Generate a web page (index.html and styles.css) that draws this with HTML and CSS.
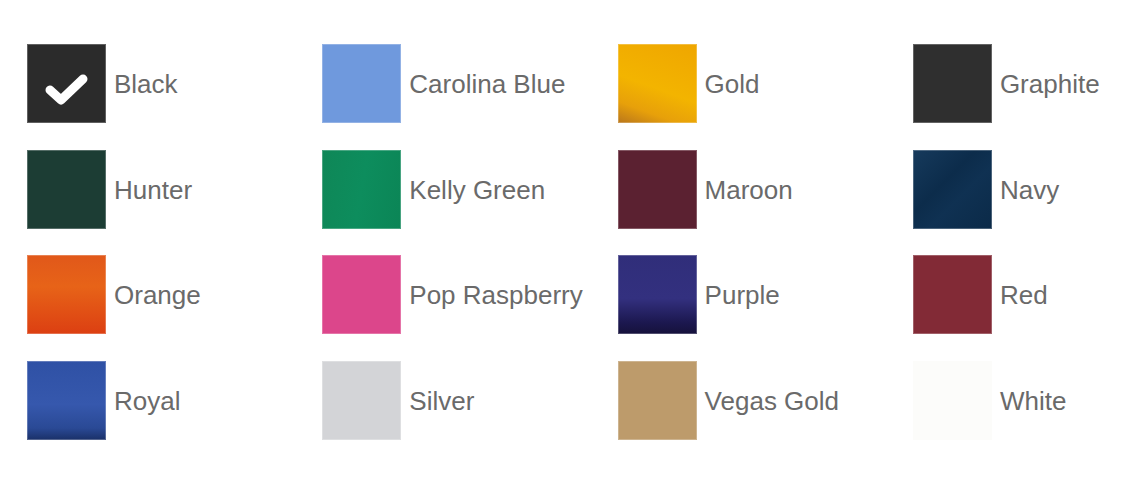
FILE: index.html
```html
<!DOCTYPE html>
<html lang="en">

<head>
    <meta charset="UTF-8">
    <title>Color Options</title>
    <link rel="stylesheet" href="styles.css">
</head>

<body>
    <div class="swatch-grid">
        <div class="option">
            <span class="swatch black selected">
                <svg class="check" viewBox="0 0 79 79" width="79" height="79">
                    <path d="M23 46 L34 56 L56 35" fill="none" stroke="#fff" stroke-width="9" stroke-linecap="round" stroke-linejoin="round"/>
                </svg>
            </span>
            <span class="label">Black</span>
        </div>
        <div class="option"><span class="swatch carolina"></span><span class="label">Carolina Blue</span></div>
        <div class="option"><span class="swatch gold"></span><span class="label">Gold</span></div>
        <div class="option"><span class="swatch graphite"></span><span class="label">Graphite</span></div>

        <div class="option"><span class="swatch hunter"></span><span class="label">Hunter</span></div>
        <div class="option"><span class="swatch kelly"></span><span class="label">Kelly Green</span></div>
        <div class="option"><span class="swatch maroon"></span><span class="label">Maroon</span></div>
        <div class="option"><span class="swatch navy"></span><span class="label">Navy</span></div>

        <div class="option"><span class="swatch orange"></span><span class="label">Orange</span></div>
        <div class="option"><span class="swatch raspberry"></span><span class="label">Pop Raspberry</span></div>
        <div class="option"><span class="swatch purple"></span><span class="label">Purple</span></div>
        <div class="option"><span class="swatch red"></span><span class="label">Red</span></div>

        <div class="option"><span class="swatch royal"></span><span class="label">Royal</span></div>
        <div class="option"><span class="swatch silver"></span><span class="label">Silver</span></div>
        <div class="option"><span class="swatch vegas"></span><span class="label">Vegas Gold</span></div>
        <div class="option"><span class="swatch white"></span><span class="label">White</span></div>
    </div>
</body>

</html>
```

FILE: styles.css
```css
/* Reset */
* {
    margin: 0;
    padding: 0;
    box-sizing: border-box;
}

body {
    font-family: 'Liberation Sans', Arial, sans-serif;
    background: #fff;
    padding: 44px 0 0 27px;
}

/* Grid of color options */
.swatch-grid {
    display: grid;
    grid-template-columns: repeat(3, 295.3px) 1fr;
    row-gap: 26.6px;
}

.option {
    display: flex;
    align-items: center;
    height: 79px;
}

.swatch {
    width: 79px;
    height: 79px;
    flex-shrink: 0;
    box-shadow: inset 0 0 0 1px rgba(255, 255, 255, 0.25);
}

.check {
    display: block;
}

.label {
    margin-left: 8px;
    font-size: 26px;
    color: #6a6a6a;
    padding-top: 2px;
    white-space: nowrap;
}

/* Swatch colors */
.black { background: #2b2b2b; }
.carolina { background: #6f99dd; }
.gold { background: linear-gradient(20deg, #b9761c 0%, #e7a00a 20%, #f3b400 45%, #efa600 100%); }
.graphite { background: #2f2f2f; }

.hunter { background: #1c3d34; }
.kelly { background: linear-gradient(100deg, #0f8757 0%, #0d8d5d 50%, #0b8556 100%); }
.maroon { background: #5b2131; }
.navy { background: linear-gradient(135deg, #163a5c 0%, #0c2c4b 40%, #0f3152 60%, #0b2a48 100%); }

.orange { background: linear-gradient(180deg, #e1581a 0%, #e76318 40%, #dc3f12 100%); }
.raspberry { background: #dc468b; }
.purple { background: linear-gradient(180deg, #302e7a 0%, #33307f 55%, #1c1850 85%, #15113b 100%); }
.red { background: #822a36; }

.royal { background: linear-gradient(180deg, #2f51a5 0%, #3658ad 55%, #2a4995 85%, #1a3068 100%); }
.silver { background: #d3d4d7; }
.vegas { background: #bd9b6b; }
.white { background: #fcfcfa; box-shadow: none; }
```
